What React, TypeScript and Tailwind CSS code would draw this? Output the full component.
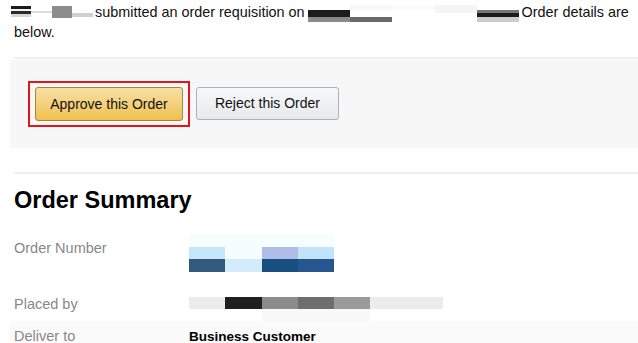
import React from 'react';

type Stripe = [number, string];

// a redacted (pixelated) chunk: a fixed-width stack of coloured stripes
const Redact: React.FC<{ w: number; top: number; stripes: Stripe[] }> = ({ w, top, stripes }) => (
  <div className="flex flex-col shrink-0" style={{ width: w, marginTop: top }}>
    {stripes.map(([h, c], i) => (
      <div key={i} style={{ height: h, background: c }} />
    ))}
  </div>
);

const blueCells = [
  ['#f5fdff', '#f5fdff', '#f5fdff', '#f5fdff'],
  ['#c6e6fb', '#f5fdff', '#b0bde8', '#c2e4fa'],
  ['#325a7f', '#d3ecfb', '#174f7e', '#27558f'],
];

const greyCells = [
  { w: 36, c: '#ececec' },
  { w: 37, c: '#1f1f1f' },
  { w: 36, c: '#8b8b8b' },
  { w: 36, c: '#6e6e6e' },
  { w: 36, c: '#9a9a9a' },
  { w: 73, c: '#ececec' },
];

export default function App() {
  return (
    <div className="w-[638px] h-[343px] overflow-hidden bg-white text-[#111] font-['Liberation_Sans',Arial,sans-serif]">
      {/* intro text */}
      <div className="h-[57px] pl-[11px] pt-[2px] text-[14.4px] leading-[20px]">
        <div className="flex h-[20px] items-start">
          <Redact w={20} top={4} stripes={[[3, '#1a1a1a'], [2, '#f2f2f2'], [3, '#2a2a2a'], [3, '#d6d6d6']]} />
          <Redact w={21} top={9} stripes={[[2, '#dcdcdc']]} />
          <Redact w={20} top={4} stripes={[[12, '#8c8c8c']]} />
          <Redact w={21} top={11} stripes={[[4, '#d0d0d0']]} />
          <span className="ml-[2px] mr-[3px] whitespace-nowrap">submitted an order requisition on</span>
          <Redact w={42} top={8} stripes={[[7, '#1c1c1c'], [5, '#8a8a8a']]} />
          <Redact w={42} top={3} stripes={[[5, '#f7f7f7'], [7, '#ffffff'], [5, '#6a6a6a']]} />
          <Redact w={43} top={3} stripes={[[5, '#fbfbfb']]} />
          <Redact w={42} top={3} stripes={[[8, '#f5f5f5']]} />
          <Redact w={42} top={8} stripes={[[3, '#777777'], [4, '#1c1c1c'], [5, '#cccccc']]} />
          <span className="ml-[3px] whitespace-nowrap">Order details are</span>
        </div>
        <div className="pl-[3px]">below.</div>
      </div>

      <div className="ml-[14px] h-[2px] bg-[#efefef]" />

      {/* action panel */}
      <div className="ml-[10px] mt-[1px] h-[88px] bg-[#f7f7f7] pl-[18px] pt-[21px] flex items-start gap-[6px]">
        <div className="border-2 border-[#e3141b] px-[5px] py-[4px]">
          <button className="w-[148px] h-[34px] rounded-[3px] border border-[#a88734] bg-gradient-to-b from-[#f7dfa5] to-[#f0c14b] text-[14px] text-[#111]">
            Approve this Order
          </button>
        </div>
        <button className="mt-[6px] w-[143px] h-[33px] rounded-[3px] border border-[#adb1b8] bg-gradient-to-b from-[#f7f8fa] to-[#e7e9ec] text-[14px] text-[#111]">
          Reject this Order
        </button>
      </div>

      <div className="ml-[14px] mt-[24px] h-[2px] bg-[#f0f0f0]" />

      {/* summary */}
      <div className="pl-[14px]">
        <h1 className="mt-[12px] text-[23.5px] leading-[28px] font-bold text-black">Order Summary</h1>

        <div className="mt-[20px] flex h-[38px] text-[14.5px] leading-[20px]">
          <div className="w-[175px] pt-[4px] text-[#888]">Order Number</div>
          <div className="flex flex-col">
            {blueCells.map((row, r) => (
              <div key={r} className="flex h-[12.67px]">
                {row.map((c, i) => (
                  <div key={i} className="w-[36.25px]" style={{ background: c }} />
                ))}
              </div>
            ))}
          </div>
        </div>

        <div className="mt-[22px] flex h-[27px] text-[14.5px] leading-[20px]">
          <div className="w-[175px] text-[#888]">Placed by</div>
          <div className="mt-[3px] flex flex-col">
            <div className="flex h-[12px]">
              {greyCells.map((g, i) => (
                <div key={i} style={{ width: g.w, background: g.c }} />
              ))}
            </div>
            <div className="ml-[73px] w-[108px] h-[12px] bg-[#f8f8f8]" />
          </div>
        </div>
      </div>

      <div className="ml-[10px] h-[23px] bg-[#fafafa] pl-[4px] pt-[8px] flex items-baseline text-[14.5px] leading-[14px]">
        <div className="w-[175px] text-[#888]">Deliver to</div>
        <div className="text-[13.5px] font-bold text-black">Business Customer</div>
      </div>
    </div>
  );
}
